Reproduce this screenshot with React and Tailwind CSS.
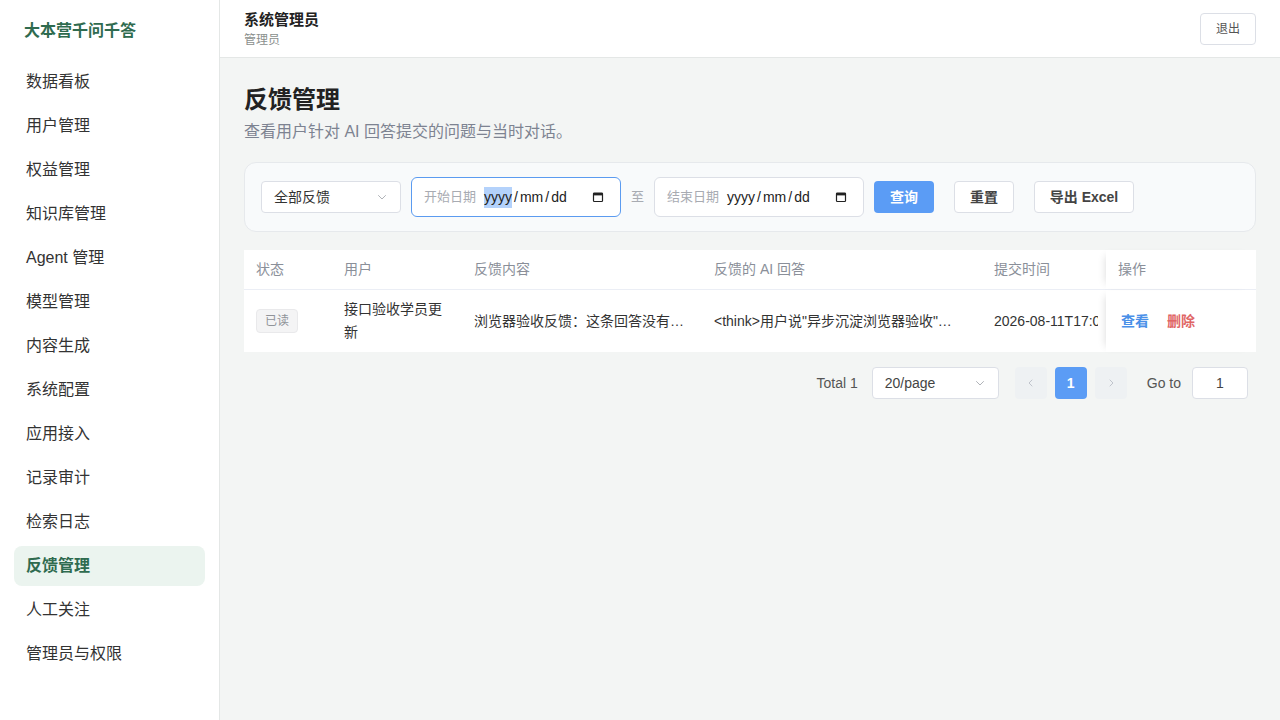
import React from 'react';

const navItems = [
  '数据看板',
  '用户管理',
  '权益管理',
  '知识库管理',
  'Agent 管理',
  '模型管理',
  '内容生成',
  '系统配置',
  '应用接入',
  '记录审计',
  '检索日志',
  '反馈管理',
  '人工关注',
  '管理员与权限',
];

const font = { fontFamily: '"Liberation Sans", "Noto Sans CJK SC", sans-serif' };

const Chevron = ({ className = '' }) => (
  <svg className={className} width="12" height="12" viewBox="0 0 12 12" fill="none">
    <path d="M2.5 4.5 6 8l3.5-3.5" stroke="currentColor" strokeWidth="1" strokeLinecap="round" strokeLinejoin="round" />
  </svg>
);

const CalendarIcon = () => (
  <svg width="12" height="12" viewBox="0 0 12 12" fill="none">
    <rect x="1.5" y="2" width="9" height="8.5" rx="0.8" stroke="#222" strokeWidth="1.2" />
    <rect x="1.5" y="2" width="9" height="2.4" fill="#222" />
  </svg>
);

const DateInput = ({ label, focused }) => (
  <div
    className={`flex h-10 w-[210px] items-center rounded-md border bg-white pl-3 pr-4 ${
      focused ? 'border-[#5b9bf0]' : 'border-[#dcdfe6]'
    }`}
  >
    <span className="text-[13px] text-[#a8abb2]">{label}</span>
    <span className="ml-2 flex flex-1 text-[14px] text-[#222]">
      {focused ? <span className="bg-[#b4d2fb]">yyyy</span> : <span>yyyy</span>}
      <span className="px-[2px]">/</span>
      <span>mm</span>
      <span className="px-[2px]">/</span>
      <span>dd</span>
    </span>
    <CalendarIcon />
  </div>
);

export default function App() {
  return (
    <div className="flex h-[720px] w-full bg-[#f3f5f4]" style={font}>
      <aside className="flex w-[220px] shrink-0 flex-col border-r border-[#e4e7e6] bg-white">
        <div className="flex h-[62px] items-center pl-6 text-[16px] font-bold text-[#2f6b4f]">大本营千问千答</div>
        <nav className="flex flex-col gap-1 px-[14px]">
          {navItems.map((item) => (
            <div
              key={item}
              className={`flex h-10 items-center rounded-lg px-3 text-[16px] ${
                item === '反馈管理' ? 'bg-[#ebf4ef] font-bold text-[#2f6b4f]' : 'text-[#333]'
              }`}
            >
              {item}
            </div>
          ))}
        </nav>
      </aside>

      <div className="flex flex-1 flex-col">
        <header className="flex h-[58px] items-center justify-between border-b border-[#e4e7e6] bg-white px-6">
          <div className="flex flex-col">
            <span className="text-[15px] font-bold leading-[20px] text-[#222]">系统管理员</span>
            <span className="mt-[2px] text-[12px] leading-[16px] text-[#8a8f8d]">管理员</span>
          </div>
          <button className="h-8 w-14 rounded border border-[#dcdfe6] bg-white text-[12px] text-[#555]">退出</button>
        </header>

        <main className="flex flex-col px-6 pt-[25px]">
          <h1 className="text-[24px] font-bold leading-[34px] text-[#222]">反馈管理</h1>
          <p className="mt-[3px] text-[16px] leading-[24px] text-[#7d8391]">查看用户针对 AI 回答提交的问题与当时对话。</p>

          <div className="mt-[18px] flex h-[70px] items-center rounded-xl border border-[#e6e9ec] bg-[#f8fafb] px-4">
            <div className="flex h-8 w-[140px] items-center justify-between rounded border border-[#dcdfe6] bg-white px-3 text-[14px] text-[#333]">
              全部反馈
              <Chevron className="text-[#b0b3b8]" />
            </div>
            <div className="ml-[10px]">
              <DateInput label="开始日期" focused />
            </div>
            <span className="mx-[10px] text-[13px] text-[#a8abb2]">至</span>
            <DateInput label="结束日期" />
            <button className="ml-[10px] h-8 w-[60px] rounded bg-[#5b9cf5] text-[14px] font-bold text-white">查询</button>
            <button className="ml-5 h-8 w-[60px] rounded border border-[#dcdfe6] bg-white text-[14px] font-bold text-[#444]">重置</button>
            <button className="ml-5 h-8 w-[100px] rounded border border-[#dcdfe6] bg-white text-[14px] font-bold text-[#444]">导出 Excel</button>
          </div>

          <div className="mt-[18px] bg-white">
            <div className="grid h-10 grid-cols-[88px_130px_240px_280px_124px_150px] items-stretch border-b border-[#ebeef5] text-[14px] text-[#8a8f99]">
              <div className="flex items-center px-3">状态</div>
              <div className="flex items-center px-3">用户</div>
              <div className="flex items-center px-3">反馈内容</div>
              <div className="flex items-center px-3">反馈的 AI 回答</div>
              <div className="flex items-center px-3">提交时间</div>
              <div className="flex items-center px-3 shadow-[-6px_0_8px_-6px_rgba(0,0,0,0.15)]">操作</div>
            </div>
            <div className="grid h-[62px] grid-cols-[88px_130px_240px_280px_124px_150px] items-stretch text-[14px] text-[#333]">
              <div className="flex items-center px-3">
                <span className="flex h-6 items-center rounded border border-[#e9e9eb] bg-[#f4f4f5] px-2 text-[12px] text-[#909399]">已读</span>
              </div>
              <div className="flex items-center px-3 leading-[23px]">接口验收学员更新</div>
              <div className="flex items-center overflow-hidden px-3">
                <span className="truncate">浏览器验收反馈：这条回答没有…</span>
              </div>
              <div className="flex items-center overflow-hidden px-3">
                <span className="truncate">&lt;think&gt;用户说"异步沉淀浏览器验收"…</span>
              </div>
              <div className="flex items-center pl-3 pr-2">
                <span className="block w-full overflow-hidden whitespace-nowrap">2026-08-11T17:03:21</span>
              </div>
              <div className="flex items-center gap-[18px] px-[15px] text-[14px] font-bold shadow-[-6px_0_8px_-6px_rgba(0,0,0,0.15)]">
                <span className="text-[#4a90e8]">查看</span>
                <span className="text-[#e06666]">删除</span>
              </div>
            </div>
          </div>

          <div className="mt-[15px] flex items-center justify-end pr-2 text-[14px] text-[#555]">
            <span>Total 1</span>
            <div className="ml-[14px] flex h-8 w-[127px] items-center justify-between rounded border border-[#dcdfe6] bg-white px-3 text-[#444]">
              20/page
              <Chevron className="text-[#b0b3b8]" />
            </div>
            <div className="ml-4 flex h-8 w-8 items-center justify-center rounded bg-[#eef1f3] text-[#c0c4cc]">
              <svg width="10" height="10" viewBox="0 0 10 10" fill="none"><path d="M6 2 3 5l3 3" stroke="currentColor" strokeLinecap="round" strokeLinejoin="round" /></svg>
            </div>
            <div className="ml-2 flex h-8 w-8 items-center justify-center rounded bg-[#5b9cf5] font-bold text-white">1</div>
            <div className="ml-2 flex h-8 w-8 items-center justify-center rounded bg-[#eef1f3] text-[#c0c4cc]">
              <svg width="10" height="10" viewBox="0 0 10 10" fill="none"><path d="M4 2l3 3-3 3" stroke="currentColor" strokeLinecap="round" strokeLinejoin="round" /></svg>
            </div>
            <span className="ml-5">Go to</span>
            <div className="ml-[11px] flex h-8 w-14 items-center justify-center rounded border border-[#dcdfe6] bg-white text-[#444]">1</div>
          </div>
        </main>
      </div>
    </div>
  );
}
